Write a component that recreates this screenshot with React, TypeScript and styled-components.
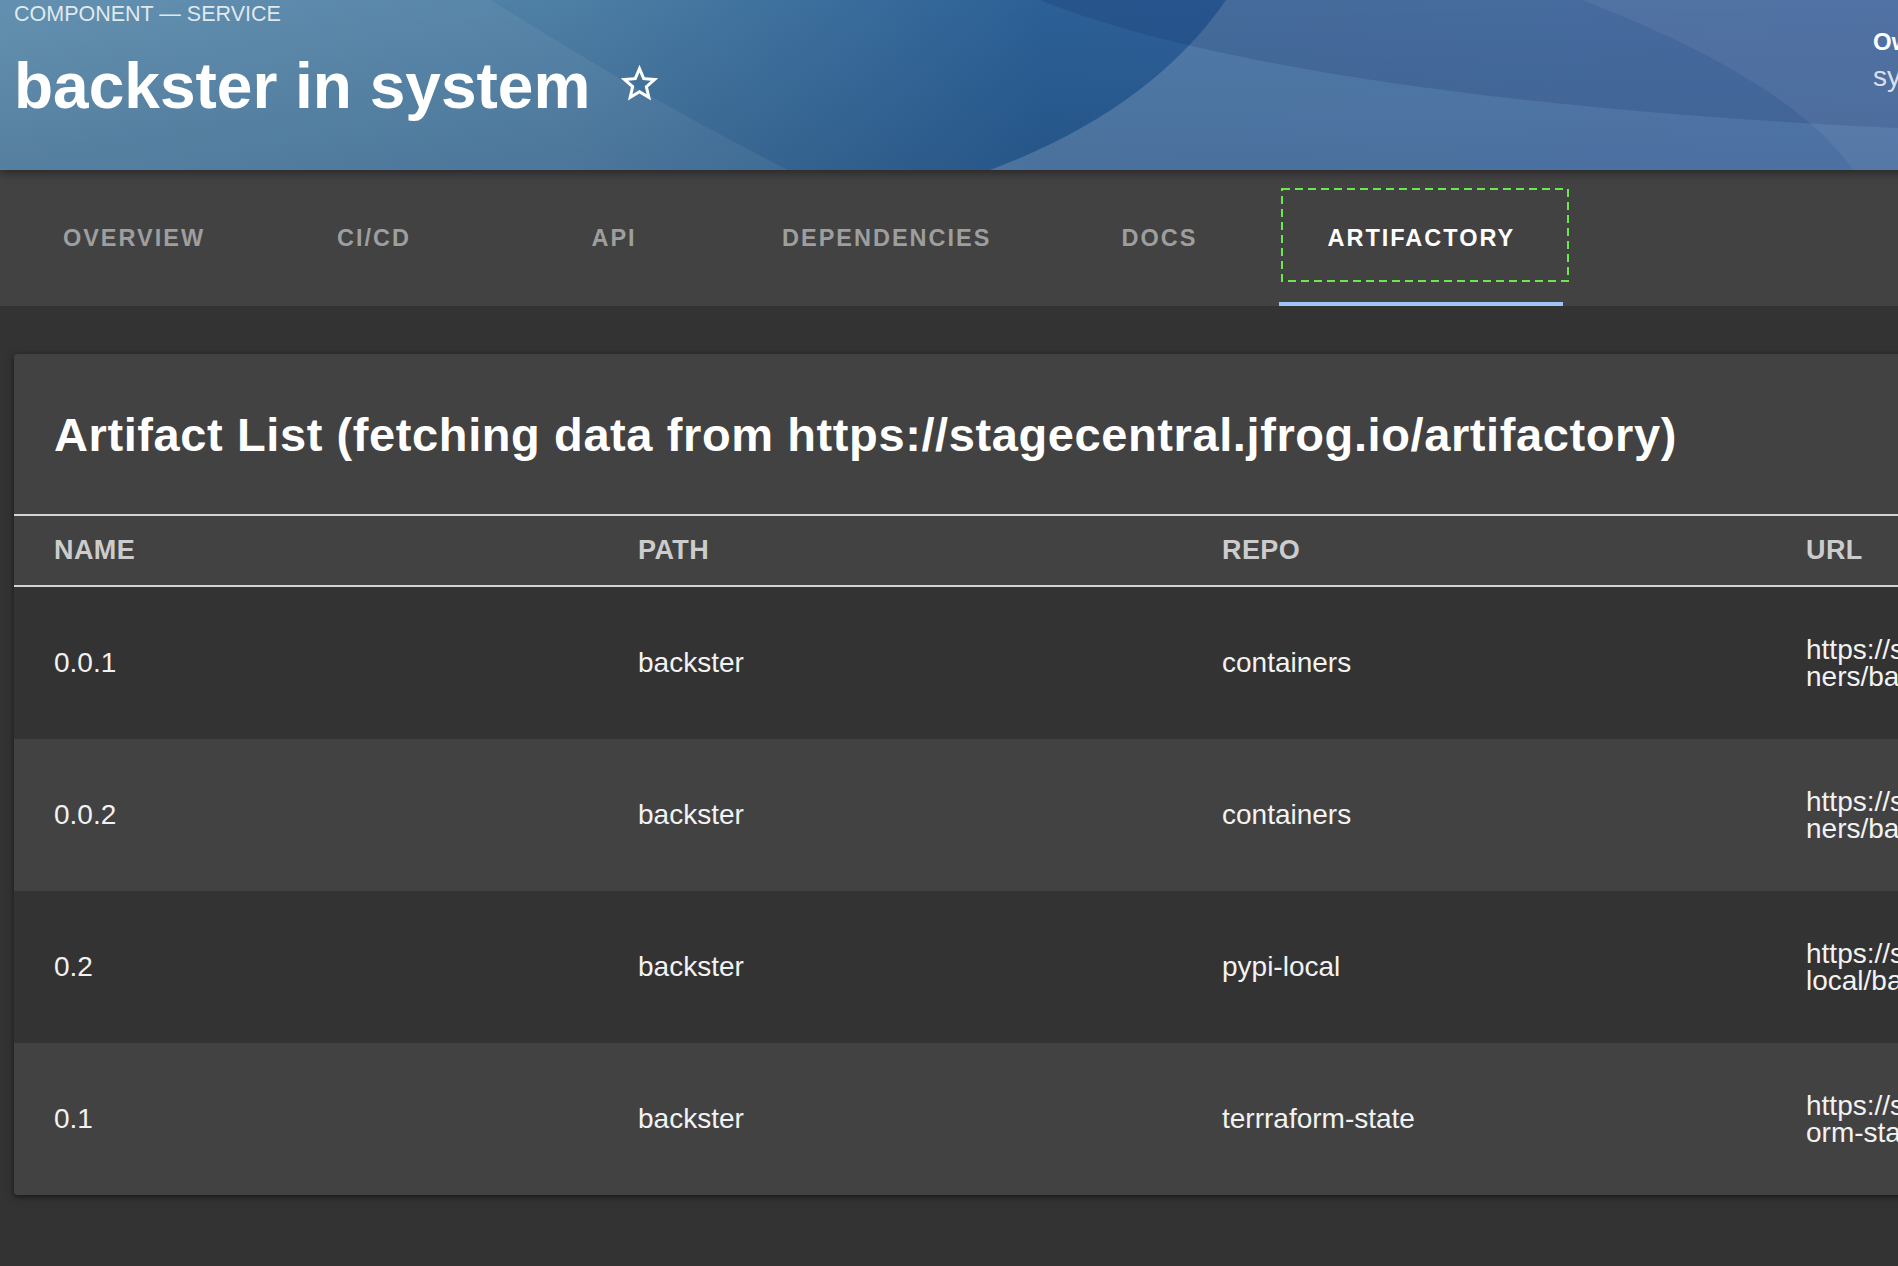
import styled, { createGlobalStyle } from 'styled-components'

const GlobalStyle = createGlobalStyle`
  html, body {
    margin: 0;
    padding: 0;
    background: #333333;
    overflow: hidden;
  }
  body {
    font-family: "Liberation Sans", Arial, Helvetica, sans-serif;
    color: #ffffff;
  }
`

const Page = styled.div`
  width: 2600px;
  min-height: 1266px;
  background: #333333;
`

const Header = styled.header`
  position: relative;
  z-index: 2;
  height: 170px;
  display: flex;
  padding-left: 14px;
  overflow: hidden;
  background: #3a68a0;
  box-shadow: 0 3px 9px rgba(0, 0, 0, 0.4);
`

const HeaderArt = styled.svg`
  position: absolute;
  left: 0;
  top: 0;
`

const TitleArea = styled.div`
  position: relative;
  flex: 0 0 1859px;
`

const TypeLabel = styled.div`
  margin-top: 2px;
  font-size: 21.5px;
  line-height: 24px;
  color: rgba(255, 255, 255, 0.82);
`

const TitleRow = styled.div`
  display: flex;
  align-items: center;
  margin-top: 24px;
`

const Title = styled.h1`
  margin: 0;
  font-size: 64px;
  line-height: 72px;
  font-weight: 700;
`

const StarButton = styled.svg`
  margin-left: 27px;
  margin-bottom: 5px;
  fill: #ffffff;
`

const InfoBlock = styled.div`
  position: relative;
  padding-top: 28px;
  white-space: nowrap;
`

const InfoLabel = styled.div`
  font-size: 24px;
  line-height: 28px;
  font-weight: 700;
`

const InfoValue = styled.div`
  margin-top: 4px;
  font-size: 28px;
  line-height: 34px;
  color: rgba(255, 255, 255, 0.8);
`

const TabBar = styled.nav`
  height: 136px;
  display: flex;
  padding-left: 14px;
  background: #424242;
`

const Tab = styled.div<{ $active?: boolean }>`
  position: relative;
  min-width: 240px;
  padding: 0 48px;
  box-sizing: border-box;
  display: flex;
  align-items: center;
  justify-content: center;
  font-size: 23.5px;
  font-weight: 700;
  letter-spacing: 2px;
  text-transform: uppercase;
  color: ${props => (props.$active ? '#ffffff' : '#9e9e9e')};

  &::after {
    content: '';
    display: ${props => (props.$active ? 'block' : 'none')};
    position: absolute;
    left: 0;
    right: 0;
    bottom: 0;
    height: 4px;
    background: #a0c4f6;
  }
`

const FocusRing = styled.svg`
  position: absolute;
  left: 2px;
  top: 18px;
`

const Content = styled.main`
  padding: 48px 14px;
`

const Card = styled.section`
  background: #424242;
  border-radius: 4px;
  overflow: hidden;
  box-shadow: 0 2px 4px rgba(0, 0, 0, 0.35), 0 2px 10px rgba(0, 0, 0, 0.25);
`

const CardTitle = styled.h2`
  margin: 0;
  height: 160px;
  display: flex;
  align-items: center;
  padding-left: 40px;
  font-size: 47px;
  letter-spacing: 0.6px;
  font-weight: 700;
  white-space: nowrap;
`

const columns = '584px 584px 584px 590px 1fr'

const HeadRow = styled.div`
  display: grid;
  grid-template-columns: ${columns};
  height: 69px;
  align-items: center;
  border-top: 2px solid #d4d4d4;
  border-bottom: 2px solid #d4d4d4;
`

const HeadCell = styled.div`
  padding-left: 40px;
  font-size: 27px;
  font-weight: 700;
  letter-spacing: 0.4px;
  color: #cccccc;
`

const Row = styled.div<{ $odd: boolean }>`
  display: grid;
  grid-template-columns: ${columns};
  height: 152px;
  align-items: center;
  background: ${props => (props.$odd ? '#333333' : '#424242')};
`

const Cell = styled.div`
  padding-left: 40px;
  font-size: 28px;
  line-height: 34px;
  color: #f2f2f2;
`

const UrlCell = styled(Cell)`
  line-height: 27px;
  overflow-wrap: anywhere;
`

const BASE = 'https://stagecentral.jfrog.io/artifactory'

const artifacts = [
  { name: '0.0.1', path: 'backster', repo: 'containers' },
  { name: '0.0.2', path: 'backster', repo: 'containers' },
  { name: '0.2', path: 'backster', repo: 'pypi-local' },
  { name: '0.1', path: 'backster', repo: 'terrraform-state' },
]

const tabs = ['Overview', 'CI/CD', 'API', 'Dependencies', 'Docs', 'Artifactory']

export default function App() {
  return (
    <Page>
      <GlobalStyle />
      <Header>
        <HeaderArt width="1898" height="170" viewBox="0 0 1898 170">
          <defs>
            <linearGradient id="hdrBase" x1="0" y1="0" x2="1" y2="0">
              <stop offset="0" stopColor="#5a8aab" />
              <stop offset="0.3" stopColor="#4d7ea4" />
              <stop offset="0.55" stopColor="#2c6096" />
              <stop offset="1" stopColor="#2f5e9e" />
            </linearGradient>
            <linearGradient id="hdrShade" x1="0" y1="0" x2="0" y2="1">
              <stop offset="0" stopColor="#001a40" stopOpacity="0" />
              <stop offset="1" stopColor="#001a40" stopOpacity="0.16" />
            </linearGradient>
          </defs>
          <rect width="1898" height="170" fill="url(#hdrBase)" />
          <rect width="1898" height="170" fill="url(#hdrShade)" />
          <path d="M0 0 H491 Q640 95 788 170 H0 Z" fill="#ffffff" opacity="0.06" />
          <path d="M1226 0 Q1150 110 990 170 H1898 V0 Z" fill="#ffffff" opacity="0.17" />
          <path d="M1040 0 C1150 45 1400 105 1898 128 V0 Z" fill="#0a1e5a" opacity="0.16" />
          <path d="M1582 0 Q1790 80 1853 170 H1898 V0 Z" fill="#ffffff" opacity="0.06" />
        </HeaderArt>
        <TitleArea>
          <TypeLabel>COMPONENT — SERVICE</TypeLabel>
          <TitleRow>
            <Title>backster in system</Title>
            <StarButton width="45" height="45" viewBox="0 0 24 24">
              <path d="M22 9.24l-7.19-.62L12 2 9.19 8.63 2 9.24l5.46 4.73L5.82 21 12 17.27 18.18 21l-1.63-7.03L22 9.24zM12 15.4l-3.76 2.27 1-4.28-3.32-2.88 4.38-.38L12 6.1l1.71 4.04 4.38.38-3.32 2.88 1 4.28L12 15.4z" />
            </StarButton>
          </TitleRow>
        </TitleArea>
        <InfoBlock>
          <InfoLabel>Owner</InfoLabel>
          <InfoValue>system-owners</InfoValue>
        </InfoBlock>
      </Header>

      <TabBar>
        {tabs.map(t => (
          <Tab key={t} $active={t === 'Artifactory'}>
            {t}
            {t === 'Artifactory' && (
              <FocusRing width="288" height="94">
                <rect
                  x="1"
                  y="1"
                  width="286"
                  height="92"
                  fill="none"
                  stroke="#6be84a"
                  strokeWidth="2"
                  strokeDasharray="8 5"
                />
              </FocusRing>
            )}
          </Tab>
        ))}
      </TabBar>

      <Content>
        <Card>
          <CardTitle>Artifact List (fetching data from {BASE})</CardTitle>
          <HeadRow>
            <HeadCell>NAME</HeadCell>
            <HeadCell>PATH</HeadCell>
            <HeadCell>REPO</HeadCell>
            <HeadCell>URL</HeadCell>
          </HeadRow>
          {artifacts.map((a, i) => (
            <Row key={a.name} $odd={i % 2 === 0}>
              <Cell>{a.name}</Cell>
              <Cell>{a.path}</Cell>
              <Cell>{a.repo}</Cell>
              <UrlCell>{`${BASE}/${a.repo}/${a.path}/${a.name}`}</UrlCell>
            </Row>
          ))}
        </Card>
      </Content>
    </Page>
  )
}
